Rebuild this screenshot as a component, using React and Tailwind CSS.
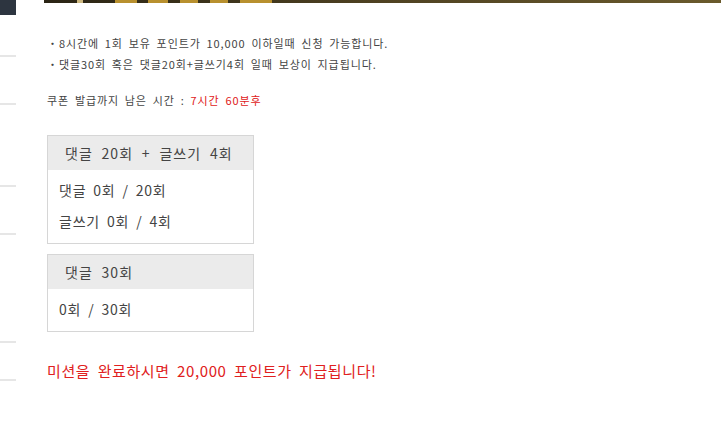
import React from "react";

const font = { fontFamily: '"Noto Sans CJK KR", "Noto Sans", sans-serif' };

export default function App() {
  const missions = [
    {
      title: "댓글 20회 + 글쓰기 4회",
      rows: ["댓글 0회 / 20회", "글쓰기 0회 / 4회"],
    },
    {
      title: "댓글 30회",
      rows: ["0회 / 30회"],
    },
  ];

  return (
    <div className="flex w-[721px] h-[434px] bg-white overflow-hidden" style={font}>
      {/* SIDEBAR EDGE */}
      <div className="flex flex-col w-[16px] shrink-0">
        <div className="h-[15px] bg-[#2d3540]" />
        <div className="mt-[40px] h-[2px] bg-[#e6e6e6]" />
        <div className="mt-[46px] h-[2px] bg-[#e6e6e6]" />
        <div className="mt-[80px] h-[2px] bg-[#e6e6e6]" />
        <div className="mt-[46px] h-[2px] bg-[#e6e6e6]" />
        <div className="mt-[106px] h-[2px] bg-[#e6e6e6]" />
        <div className="mt-[36px] h-[2px] bg-[#e6e6e6]" />
      </div>

      {/* CONTENT */}
      <div className="flex-1 flex flex-col pl-[28px]">
        {/* banner edge */}
        <div className="h-[3px] flex bg-gradient-to-r from-[#2a2414] via-[#4f4222] to-[#6a5a2c]">
          <div className="w-[33px]" />
          <div className="w-[6px] bg-[#cdb880]" />
          <div className="w-[32px]" />
          <div className="w-[22px] bg-[#b8902e]" />
          <div className="w-[11px]" />
          <div className="w-[20px] bg-[#b8902e]" />
          <div className="w-[12px]" />
          <div className="w-[18px] bg-[#b8902e]" />
          <div className="w-[12px]" />
          <div className="w-[18px] bg-[#b8902e]" />
          <div className="w-[12px]" />
          <div className="w-[32px] bg-[#b8902e]" />
        </div>

        <div className="pl-[3px] flex flex-col">
          <ul className="mt-[30px] text-[11px] leading-[21px] text-[#444] tracking-[0.9px] [word-spacing:2.5px]">
            <li>・8시간에 1회 보유 포인트가 10,000 이하일때 신청 가능합니다.</li>
            <li>・댓글30회 혹은 댓글20회+글쓰기4회 일때 보상이 지급됩니다.</li>
          </ul>

          <p className="mt-[15px] text-[11px] leading-[21px] text-[#444] tracking-[0.9px] [word-spacing:2.5px]">
            쿠폰 발급까지 남은 시간 : <span className="text-[#e02020]">7시간 60분후</span>
          </p>

          <div className="mt-[24px] flex flex-col gap-[10px]">
            {missions.map((m) => (
              <div key={m.title} className="w-[207px] border border-[#d6d6d6]">
                <div className="h-[34px] bg-[#ebebeb] pl-[17px] flex items-center text-[14px] text-[#444] tracking-[1px] [word-spacing:4.7px]">
                  {m.title}
                </div>
                <div className="pt-[5px] pb-[6px] pl-[11px] text-[14px] leading-[31px] text-[#444] tracking-[0.8px] [word-spacing:3px]">
                  {m.rows.map((r) => (
                    <div key={r}>{r}</div>
                  ))}
                </div>
              </div>
            ))}
          </div>

          <p className="mt-[29px] text-[15px] leading-[20px] text-[#e02020] tracking-[0.6px] [word-spacing:3.5px]">
            미션을 완료하시면 20,000 포인트가 지급됩니다!
          </p>
        </div>
      </div>
    </div>
  );
}
